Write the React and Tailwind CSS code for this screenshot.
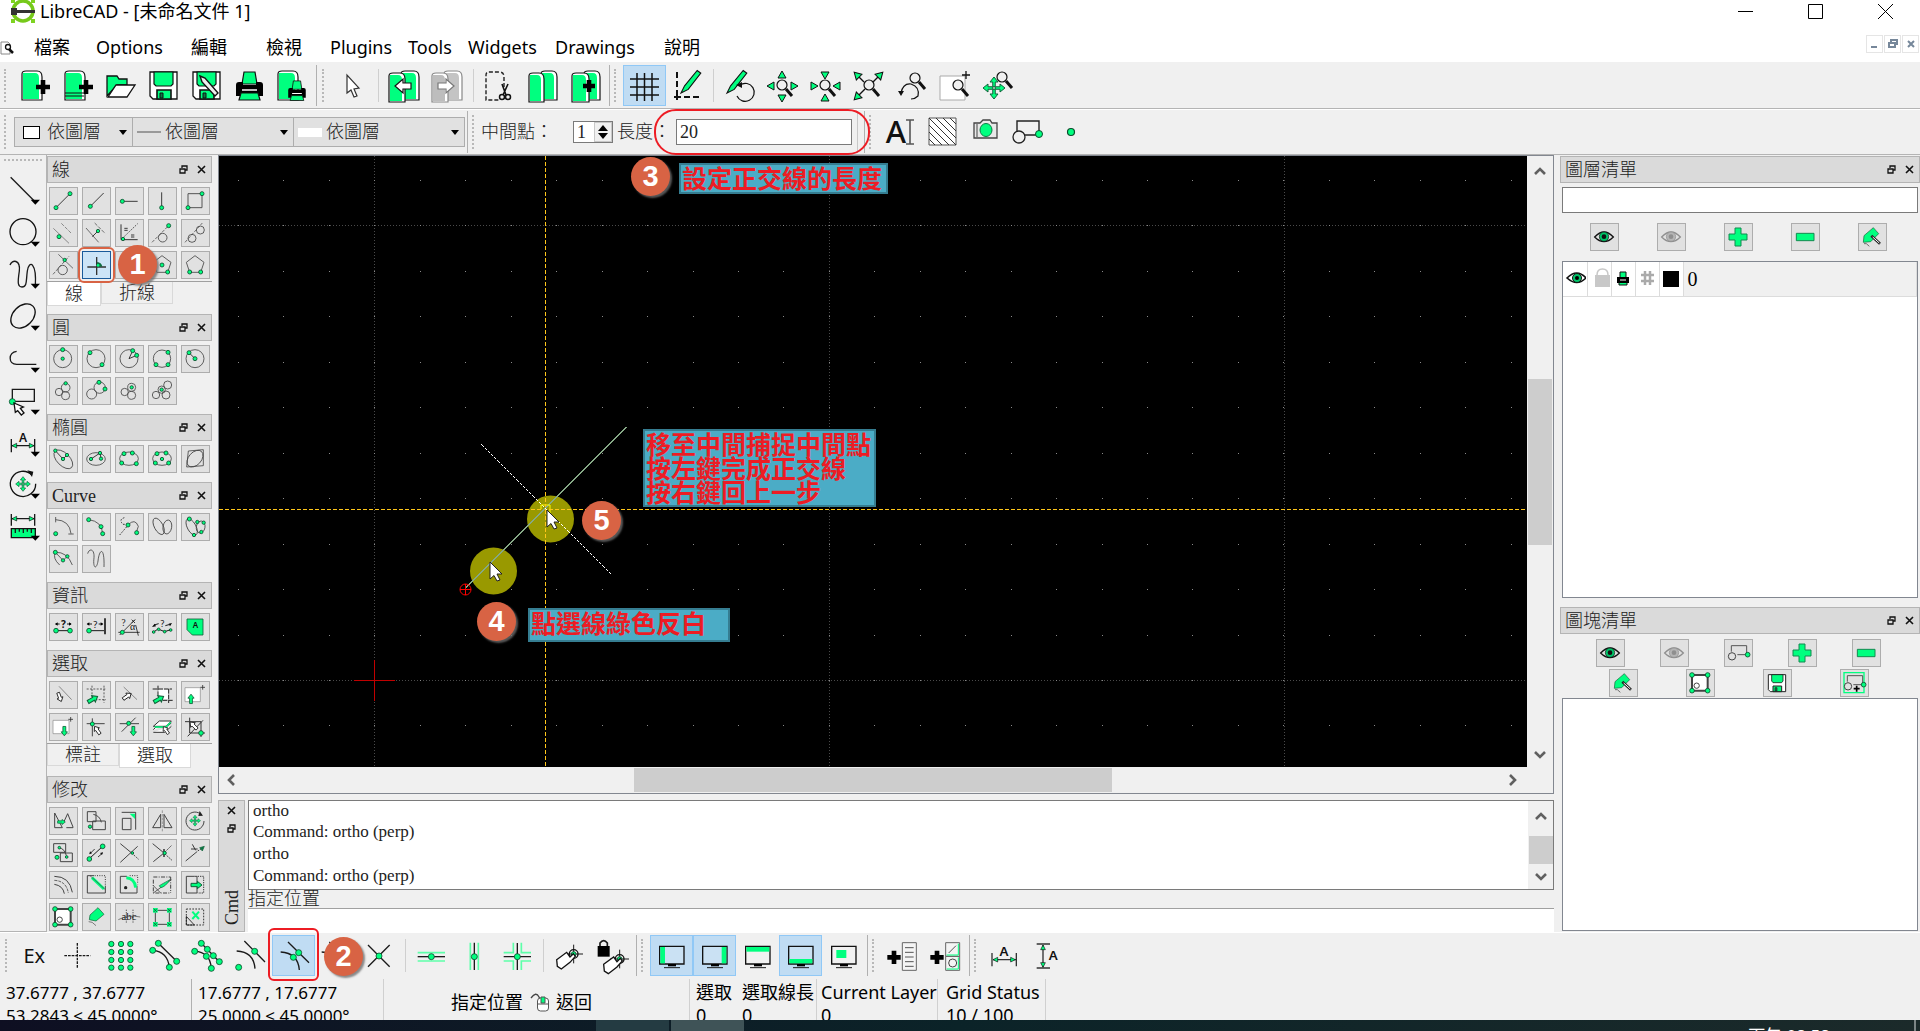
import React from "react";

const G = "#00ff7f";
const K = "#1a1a1a";

/* ---------- drawing helpers ---------- */

const Dot = ({ x, y, r = 6 }) => <circle cx={x} cy={y} r={r} fill={G} stroke="#0d4a2c" strokeWidth="2.5" />;

const Ln = ({ d, c = K, w = 2.5, dash, fill = "none" }) => (
  <path d={d} stroke={c} strokeWidth={w} strokeDasharray={dash} fill={fill} />
);

const Ci = ({ x, y, r, w = 2.5, c = "#444" }) => <circle cx={x} cy={y} r={r} fill="none" stroke={c} strokeWidth={w} />;

const El = ({ x, y, rx, ry, a = 0, w = 2.5 }) => (
  <ellipse cx={x} cy={y} rx={rx} ry={ry} fill="none" stroke="#444" strokeWidth={w} transform={`rotate(${a} ${x} ${y})`} />
);

const Arrow = ({ x, y, a = 0, s = 1, fill = "#fff", stroke = "#222" }) => (
  <path
    d="M0 -17 L11 -3 L5 -3 L5 16 L-5 16 L-5 -3 L-11 -3 Z"
    fill={fill}
    stroke={stroke}
    strokeWidth="3"
    transform={`translate(${x} ${y}) rotate(${a}) scale(${s})`}
  />
);

const Txt = ({ x, y, s = 26, children, serif, w = 400 }) => (
  <text
    x={x}
    y={y}
    fontSize={s}
    fontWeight={w}
    textAnchor="middle"
    fill="#111"
    fontFamily={serif ? '"Liberation Serif", serif' : '"Noto Sans", sans-serif'}
  >
    {children}
  </text>
);

const Moves = ({ x, y, s = 1 }) => (
  <g transform={`translate(${x} ${y}) scale(${s})`}>
    {[0, 90, 180, 270].map((a) => (
      <path key={a} d="M-2.5 -2.5 V-12 H-8 L0 -22 L8 -12 H2.5 V-2.5 Z" fill={G} stroke="#12613a" strokeWidth="2" transform={`rotate(${a})`} />
    ))}
  </g>
);

/* ---------- dock icons, 87 x 84 grid ---------- */

const eye = (c, f) => (
  <>
    <path d="M14 42 Q42 12 70 42 Q42 70 14 42Z" fill="#e1e1e1" stroke={c} strokeWidth="4" />
    <circle cx="42" cy="41" r="14" fill={f} stroke={c} strokeWidth="2" />
    <circle cx="42" cy="41" r="7" fill={c} />
  </>
);
const blockShape = (
  <>
    <path d="M22 38 V20 H68 V47 H40" fill="none" stroke="#555" strokeWidth="3" />
    <Ci x={24} y={52} r={11} w={3} />
    <Dot x={71} y={47} r={7} />
  </>
);
const floppy = (
  <>
    <path d="M16 17 H68 V68 H22 L16 62Z" fill="#fff" stroke="#222" strokeWidth="3" />
    <path d="M26 17 H60 V36 L56 41 H30 L26 36Z" fill={G} stroke="#222" strokeWidth="2.5" />
    <path d="M30 68 V51 H56 V68Z" fill={G} stroke="#222" strokeWidth="3" />
    <path d="M36 56 H42 V66 H36Z" fill="#0a7a44" stroke="#222" strokeWidth="2" />
  </>
);
const frameBlock = (
  <>
    <path d="M18 18 H65 V65 H18Z" fill="#fff" stroke="#444" strokeWidth="6" />
    <Ci x={32} y={50} r={8} w={3} />
    <Dot x={18} y={18} r={7} />
    <Dot x={65} y={18} r={7} />
    <Dot x={18} y={65} r={7} />
    <Dot x={65} y={65} r={7} />
  </>
);
const pent = <path d="M42 14 L69 34 L59 64 H26 L16 34Z" fill="none" stroke="#444" strokeWidth="2.5" />;
const editTag = (
  <>
    <path d="M16 58 L18 38 L46 14 L62 32 L38 56Z" fill={G} stroke="#12613a" strokeWidth="2" />
    <path d="M40 38 L66 62" stroke="#222" strokeWidth="8" />
    <path d="M44 42 L64 60" stroke="#fff" strokeWidth="3" />
    <Ln d="M18 62 Q24 58 34 70" c="#555" />
  </>
);

const I = {
  l1: <><Ln d="M21 62 L63 20" /><Dot x={21} y={62} /><Dot x={63} y={20} /></>,
  l2: <><Ln d="M25 58 L65 18" /><Dot x={25} y={58} /></>,
  l3: <><Ln d="M22 43 H68" /><Dot x={22} y={43} /></>,
  l4: <><Ln d="M41 16 V62" /><Dot x={41} y={62} /></>,
  l5: <><Ln d="M21 20 H63 V62 H21Z" c="#555" w={3} /><Dot x={21} y={62} /><Dot x={63} y={20} /></>,
  l6: <><Ln d="M13 28 L60 73" c="#777" /><Ln d="M37 13 L68 44" c="#777" dash="11 4" /><Dot x={30} y={53} /></>,
  l7: <><Ln d="M12 27 L50 70" c="#555" /><Ln d="M38 12 L70 44" c="#555" dash="11 4" /><Ln d="M31 53 L47 37" /><Dot x={48} y={36} r={5} /></>,
  l8: <><Ln d="M18 16 V62 H68" c="#333" w={3} /><Ln d="M20 60 L68 14" dash="4 4" /><Ln d="M28 28 H38 M28 34 H38 M48 48 H58 M48 54 H58" /><Dot x={24} y={60} r={5} /></>,
  l9: <><Ln d="M12 70 L62 20" dash="10 4" c="#555" /><Ci x={44} y={56} r={13} /><Dot x={62} y={20} /></>,
  l10: <><Ln d="M12 70 L64 12" dash="10 4" c="#555" /><Ci x={33} y={58} r={12} /><Ci x={58} y={33} r={12} /></>,
  l11: <><Ln d="M12 70 L60 16" dash="10 4" c="#555" /><Ln d="M28 10 L72 52" c="#555" /><Ci x={41} y={57} r={14} /><Dot x={47} y={27} r={5} /></>,
  l12: <><Ln d="M16 48 H72 M44 18 V72" c="#333" w={4} /><path d="M46 46 V34 Q58 36 60 46Z" fill="#0a7a44" stroke="#12613a" strokeWidth="2" /><circle cx="48" cy="43" r="4" fill={G} /></>,
  l13: <>{pent}<Dot x={42} y={42} /></>,
  l14: <>{pent}<Dot x={42} y={42} /><Dot x={59} y={63} /></>,
  l15: <>{pent}<Dot x={26} y={63} /><Dot x={59} y={63} /></>,
  c1: <><Ci x={41} y={41} r={27} /><Dot x={41} y={41} r={5} /><Dot x={41} y={14} /></>,
  c2: <><Ci x={42} y={41} r={27} /><Dot x={24} y={23} /><Dot x={60} y={59} /></>,
  c3: <><Ci x={42} y={41} r={27} /><Ln d="M53 17 L42 41 L65 31" /><Dot x={53} y={17} /><Dot x={65} y={31} /></>,
  c4: <><Ci x={42} y={41} r={26} /><Dot x={60} y={22} /><Dot x={24} y={59} /><Dot x={60} y={59} /></>,
  c5: <><Ci x={42} y={41} r={27} /><Ln d="M24 23 L42 41" /><Dot x={24} y={23} /><Dot x={42} y={41} /></>,
  c6: <><Ci x={30} y={45} r={11} /><Ci x={50} y={56} r={12} /><Ci x={50} y={32} r={13} /><Dot x={50} y={19} r={5} /></>,
  c7: <><Ci x={29} y={51} r={15} /><Ci x={53} y={32} r={17} /><Dot x={51} y={16} /><Dot x={69} y={36} /></>,
  c8: <><Ci x={29} y={45} r={11} /><Ci x={50} y={55} r={12} /><Ci x={50} y={31} r={12} /><Dot x={50} y={31} r={5} /></>,
  c9: <><Ci x={24} y={54} r={11} /><Ci x={54} y={54} r={12} /><Ci x={59} y={24} r={12} /><Ci x={41} y={38} r={11} /><Dot x={41} y={38} r={5} /></>,
  e1: <><El x={43} y={43} rx={35} ry={19} a={45} /><Ln d="M19 17 L42 42 L54 30" /><Dot x={19} y={17} r={5} /><Dot x={54} y={30} r={5} /><Dot x={42} y={42} r={5} /></>,
  e2: <><El x={42} y={42} rx={28} ry={19} /><Ln d="M27 42 L54 24 L57 41" /><Dot x={27} y={42} r={5} /><Dot x={54} y={24} r={5} /><Dot x={57} y={41} r={5} /></>,
  e3: <><El x={42} y={41} rx={28} ry={20} /><Dot x={27} y={26} /><Dot x={52} y={24} /><Dot x={20} y={54} /><Dot x={64} y={56} /></>,
  e4: <><El x={42} y={41} rx={28} ry={20} /><Dot x={27} y={26} /><Dot x={54} y={24} /><Dot x={22} y={54} /><Dot x={62} y={54} /><Dot x={42} y={42} r={5} /></>,
  e5: <><Ln d="M22 18 L67 14 L67 62 L17 66Z" c="#444" /><El x={42} y={41} rx={29} ry={19} a={-48} /></>,
  v1: <><Ln d="M20 20 Q62 22 66 62" c="#444" /><Ln d="M20 12 V28 M58 63 H74" c="#444" /><Dot x={20} y={62} /></>,
  v2: <><Ln d="M20 20 Q60 25 62 62" c="#444" /><Dot x={20} y={20} /><Dot x={57} y={41} /><Dot x={62} y={62} /></>,
  v3: <><Ln d="M28 14 Q10 20 24 34 H36 M14 66 L38 38" dash="5 4" /><Ln d="M39 36 Q60 14 70 40 L64 58" c="#444" /><Dot x={39} y={36} /><Dot x={65} y={59} /></>,
  v4: <><El x={32} y={40} rx={27} ry={13} a={62} /><El x={58} y={42} rx={21} ry={13} a={100} /></>,
  v5: <><El x={32} y={42} rx={27} ry={13} a={62} /><El x={59} y={42} rx={18} ry={13} a={100} /><Dot x={25} y={18} /><Dot x={49} y={27} r={5} /><Dot x={68} y={29} r={5} /><Dot x={39} y={66} r={5} /><Dot x={61} y={57} r={5} /></>,
  v6: <><Ln d="M32 60 Q10 40 19 22 Q55 20 70 60 M19 22 L42 46 L55 34" c="#444" /><Dot x={19} y={22} /><Dot x={55} y={34} r={5} /><Dot x={42} y={46} r={5} /></>,
  v7: <Ln d="M17 26 C22 8,38 12,36 38 C32 72,44 74,48 48 C52 10,68 4,66 66" c="#444" />,
  i1: <><Ln d="M21 53 H63" w={3} /><Txt x={43} y={44} s={30} w={700}>?</Txt><Ln d="M20 33 H32 M54 33 H66" w={3} /><path d="M18 33 l8 -5 v10z M68 33 l-8 -5 v10z" /><Dot x={21} y={53} r={7} /><Dot x={63} y={53} r={7} /></>,
  i2: <><Ln d="M21 53 H66" w={3} /><Txt x={40} y={44} s={28}>?</Txt><Ln d="M16 33 H30 M50 33 H62" w={3} /><path d="M14 33 l8 -5 v10z M64 33 l-8 -5 v10z" /><Ln d="M69 16 V64" w={5} /><Dot x={21} y={53} r={7} /></>,
  i3: <><Ln d="M10 58 H74 M14 66 L60 20 M62 36 L70 68" /><Txt x={26} y={38} s={28} serif>?</Txt><Txt x={53} y={52} s={30} serif>α</Txt><Ln d="M50 20 L60 30 M60 20 L50 30" /><Dot x={22} y={58} /></>,
  i4: <><Ln d="M17 57 L30 48 L50 56 L68 50" w={3} /><Txt x={43} y={42} s={26}>?</Txt><path d="M12 42 l8 -10 4 8z M72 30 l-10 2 4 8z" /><Ln d="M18 36 L32 32 M52 38 L66 34" w={3} /><Dot x={17} y={57} r={4} /><Dot x={32} y={49} r={4} /><Dot x={50} y={56} r={4} /><Dot x={68} y={51} r={4} /></>,
  i5: <><path d="M18 18 H66 V66 H34 L18 50Z" fill={G} stroke="#12613a" strokeWidth="2.5" /><Txt x={43} y={46} s={24} w={600}>A</Txt></>,
  s1: <><Ln d="M30 16 L68 56" c="#777" /><Arrow x={32} y={48} a={160} s={0.85} /></>,
  s2: <><Ln d="M30 14 V64 M66 14 V66 M14 24 H72 M40 56 H72" dash="6 4" c="#444" /><Arrow x={32} y={55} a={60} fill={G} stroke="#12613a" /></>,
  s3: <><Ln d="M26 18 L66 56" c="#777" /><Arrow x={36} y={46} a={55} s={0.9} /></>,
  s4: <><path d="M30 26 H60 V54 H30Z" fill="#fff" /><Ln d="M30 14 V44 M14 24 H72 M62 24 V66 M44 58 H74" c="#222" w={3} dash="14 3" /><Arrow x={32} y={55} a={60} fill={G} stroke="#12613a" /></>,
  s5: <><path d="M12 20 H58 V62 H12Z" fill="#fff" stroke="#888" strokeWidth="2" /><Ln d="M65 12 V26 M58 19 H72" c="#333" /><Arrow x={30} y={54} s={0.85} fill={G} stroke="#12613a" /></>,
  s6: <><path d="M12 22 H60 V62 H12Z" fill="#fff" stroke="#888" strokeWidth="2" /><Ln d="M65 12 V26 M58 19 H72" c="#333" /><Arrow x={46} y={54} a={180} s={0.85} fill={G} stroke="#12613a" /></>,
  s7: <><Ln d="M14 32 H68 M31 16 V70" c="#444" w={3} /><Dot x={31} y={33} /><Arrow x={46} y={52} a={-35} s={0.85} /></>,
  s8: <><Ln d="M14 32 H72 M20 56 L62 14" c="#444" w={3} /><Dot x={41} y={31} /><Arrow x={55} y={54} a={180} s={0.85} fill={G} stroke="#12613a" /></>,
  s9: <><path d="M16 40 L34 24 H70 L54 40Z M16 50 L24 42 H54 L70 30 M16 58 H50 L70 40" fill="#fff" stroke="#333" strokeWidth="3" /><Ln d="M20 42 H54 L68 28" c={G} w={4} /><Arrow x={54} y={52} a={-35} s={0.8} /></>,
  s10: <><Ln d="M26 14 V60 H72 M12 26 H60 V72 M20 70 L66 22" c="#333" w={3} /><Dot x={60} y={60} r={7} /><Arrow x={38} y={38} a={-45} s={0.9} /></>,
  m1: <><path d="M17 18 V62 H40Z M52 62 H72 V60 L56 20 L44 46" fill="none" stroke="#444" strokeWidth="3" /><Arrow x={37} y={45} a={90} s={0.7} fill={G} stroke="#12613a" /></>,
  m2: <><Ln d="M16 14 H42 V44 H16Z M32 42 H70 V68 H32Z M34 22 Q54 26 58 46" c="#444" w={3} /><Dot x={24} y={59} r={5} /></>,
  m3: <><Ln d="M20 16 H62 V68 M22 34 H48 V68 H22Z" c="#444" w={3} /><path d="M44 20 H60 V36Z" fill={G} /></>,
  m4: <><Ln d="M38 22 V62 H14Z M48 22 V62 H72Z" c="#444" w={3} /><Ln d="M43 10 V74" c="#777" w={2} dash="8 3" /></>,
  m5: <><path d="M62 24 A27 27 0 1 0 69 42" fill="none" stroke="#444" strokeWidth="3" /><path d="M56 12 L66 26 L52 27Z" fill="#222" /><Moves x={42} y={41} s={0.75} /></>,
  m6: <><Ln d="M14 14 H50 V40 H14Z M34 42 H70 V68 H34Z M30 26 Q48 30 52 50" c="#444" w={3} /><Dot x={24} y={55} /><Dot x={31} y={26} r={4} /><Dot x={53} y={54} r={4} /></>,
  m7: <><Ln d="M22 59 L62 22" w={3} /><Ln d="M24 44 L38 30 M48 54 L62 42" /><path d="M22 46 l2 -9 6 6z M63 40 l-9 2 6 6z" fill="#111" /><Dot x={22} y={60} r={7} /><Dot x={62} y={22} r={7} /></>,
  m8: <><Ln d="M16 14 L50 42 M16 70 L68 22" c="#444" w={3} /><Ln d="M52 44 L72 62" dash="4 3" /><Dot x={52} y={42} r={4} /></>,
  m9: <><Ln d="M14 14 L48 42 L16 68" c="#444" w={3} /><Ln d="M50 40 L70 20 M50 44 L72 64" dash="5 3" /><Ln d="M48 30 V54" w={4} /><Dot x={50} y={42} r={5} /></>,
  m10: <><Ln d="M14 66 L48 38" c="#444" w={3} /><Ln d="M50 36 L66 26" dash="5 3" /><Ln d="M34 16 L44 34 M30 30 H50" /><path d="M56 26 L70 22 L64 36Z" fill="#0a7a44" stroke="#12613a" strokeWidth="2" /></>,
  m11: <><Ln d="M16 16 Q62 16 70 64 M16 40 Q42 44 46 68" c="#444" w={3} /><Ln d="M16 28 Q52 30 58 66" c="#444" dash="9 3" /></>,
  m12: <><Ln d="M16 14 V66 H70 V44 M16 14 H36" c="#444" w={3} /><Ln d="M38 14 H70 V44" dash="3 4" /><Ln d="M30 20 L66 54" c={G} w={9} /><Ln d="M24 14 L70 56" c="#444" w={2} /></>,
  m13: <><Ln d="M16 16 V66 H66 V44 M16 16 H36" c="#444" w={3} /><Ln d="M44 14 H68 V40" dash="3 4" /><Ln d="M34 20 Q60 22 62 50" c={G} w={9} /><circle cx="32" cy="50" r="5" fill="#222" /></>,
  m14: <><Ln d="M16 18 H68 M16 26 V66 H68 M68 18 V66" dash="12 4 3 4" c="#444" w={3} /><Ln d="M16 44 L38 66 M16 66 L70 26" c="#444" /><path d="M34 44 Q44 38 66 26 Q52 48 38 50Z" fill={G} stroke="#12613a" strokeWidth="2" /></>,
  m15: <><Ln d="M40 16 H16 V66 H48 V16Z" c="#444" w={3} /><Ln d="M50 16 H68 V66 H50" dash="4 3" /><Arrow x={46} y={42} a={90} fill={G} stroke="#12613a" /></>,
  m16: frameBlock,
  m17: <><path d="M22 50 L24 36 L48 14 L66 34 L42 54Z" fill={G} stroke="#12613a" strokeWidth="2" /><Ln d="M20 56 Q30 54 42 68" c="#666" /></>,
  m18: <><Txt x={42} y={52} s={32} serif>abc</Txt><Ln d="M10 50 Q40 34 76 42" c="#444" w={2} /><Ln d="M34 20 V60 M54 20 V60" dash="4 3" w={2} /></>,
  m19: <><Ln d="M22 22 H64 V64 H22Z" c="#444" w={3} />{[[22, 22], [64, 22], [22, 64], [64, 64]].map(([a, b]) => <g key={a + "-" + b}><rect x={a - 7} y={b - 7} width="14" height="14" fill={G} /><Ln d={`M${a - 5} ${b - 5} l10 10 m0 -10 l-10 10`} c="#12613a" /></g>)}</>,
  m20: <><Ln d="M16 18 H68 V66 H16Z" dash="5 4" c="#333" w={3} /><Ln d="M34 26 L54 48 M54 26 L34 48" c={G} w={6} /><Ln d="M16 40 V66 H40Z" /></>,
  eye: eye("#111", "#00c468"),
  eyeOff: eye("#8f8f8f", "#b5b5b5"),
  plus: <path d="M33 15 H51 V33 H69 V51 H51 V69 H33 V51 H15 V33 H33Z" fill={G} stroke="#128a50" strokeWidth="3" />,
  minus: <path d="M16 31 H69 V53 H16Z" fill={G} stroke="#128a50" strokeWidth="3" />,
  edit: editTag,
  block: blockShape,
  save: floppy,
  insert: <><path d="M12 11 H72 V71 H12Z" fill="none" stroke={G} strokeWidth="4" />{blockShape}<Ln d="M50 50 V68 M41 59 H59" w={5} c="#000" /></>,
};

/* ---------- large tool icons, 43 x 41 grid ---------- */

const Doc = ({ x = 9, y = 6, w = 20, c = G, s = "#111" }) => (
  <>
    <path d={`M${x} ${y + 29} V${y + 3} Q${x} ${y} ${x + 4} ${y} H${x + w - 5} Q${x + w} ${y} ${x + w} ${y + 6} V${y + 29}Z`} fill="#fff" stroke={s} strokeWidth="1.2" />
    <path d={`M${x + 1} ${y + 28} V${y + 2} H${x + w - 7} Q${x + w - 3} ${y + 2} ${x + w - 3} ${y + 7} V${y + 28}Z`} fill={c} />
  </>
);
const Plus = ({ x, y, r = 7 }) => <path d={`M${x} ${y - r} V${y + r} M${x - r} ${y} H${x + r}`} stroke="#000" strokeWidth="4.6" />;
const Lens = ({ x, y, r = 5 }) => (
  <>
    <circle cx={x} cy={y} r={r} fill="#f0f0f0" stroke="#111" strokeWidth="1.2" />
    <path d={`M${x + r - 1} ${y + r - 1} l6 7`} stroke="#111" strokeWidth="3" />
  </>
);
const Tri = ({ x, y, a }) => <path d="M-4 3 L0 -4 L4 3Z" fill={G} stroke="#111" strokeWidth="1" transform={`translate(${x} ${y}) rotate(${a})`} />;
const bigFloppy = (
  <>
    <path d="M8 7 H35 V34 H11 L8 31Z" fill="#fff" stroke="#111" strokeWidth="1.3" />
    <path d="M12 7 H31 V19 L29 21 H14 L12 19Z" fill={G} stroke="#111" strokeWidth="1.2" />
    <path d="M15 34 V25 H29 V34Z" fill={G} stroke="#111" strokeWidth="1.6" />
    <path d="M18 28 H21 V33 H18Z" fill="#0a7a44" stroke="#111" />
  </>
);
const printer = (t) => (
  <g transform={t}>
    <path d="M14 19 L16 7 H27 L29 19Z" fill={G} stroke="#111" strokeWidth="1.2" />
    <path d="M8 20 Q8 17 11 17 H15 V20 H28 V17 H32 Q35 17 35 20 V31 H8Z" fill="#000" />
    <path d="M13 28 H30 L32 35 H11Z" fill={G} stroke="#111" strokeWidth="1.2" />
    <path d="M14 25 H29" stroke="#fff" strokeWidth="1.5" />
  </g>
);
const pencil = (t) => <path d="M0 0 L4 -8 L18 -25 L22 -22 L8 -4Z" fill={G} stroke="#111" strokeWidth="1.2" transform={t} />;

const T = {
  new: <><Doc /><Plus x={30} y={22} /></>,
  newTpl: <><Doc /><path d="M9 28 H28 M9 31 H28" stroke="#111" /><Plus x={30} y={22} /></>,
  open: <><path d="M8 31 V11 H18 L20 14 H28 V20 H18Z" fill={G} stroke="#111" strokeWidth="1.3" /><path d="M9 32 L17 20 H36 L28 32Z" fill="#fff" stroke="#111" strokeWidth="1.3" /></>,
  save: bigFloppy,
  saveAs: <>{bigFloppy}<path d="M15 11 L20 13 L33 28 L30 31 L17 17Z" fill="#eee" stroke="#111" strokeWidth="1.4" /></>,
  print: printer(),
  preview: <><Doc x={7} />{printer("translate(12 11) scale(0.65 0.7)")}</>,
  select: <path d="M16 10 V28 L20 25 L23 32 L26 31 L23 24 L28 23Z" fill="#fff" stroke="#333" strokeWidth="1.2" />,
  undo: <><Doc x={18} y={6} w={18} /><Doc x={6} y={8} w={16} /><path d="M12 21 L20 14 V18 H28 V24 H20 V28Z" fill="#fff" stroke="#111" strokeWidth="1.2" /></>,
  redo: <><Doc x={18} y={6} w={18} c="#c4c4c4" s="#888" /><Doc x={6} y={8} w={16} c="#bdbdbd" s="#888" /><path d="M28 21 L20 14 V18 H12 V24 H20 V28Z" fill="#fff" stroke="#777" strokeWidth="1.2" /></>,
  cut: <><path d="M26 22 V12 Q26 7 21 7 H11 Q8 7 8 10 V35 H21" fill="none" stroke="#222" strokeWidth="1.4" strokeDasharray="4 2" /><path d="M24 19 L28 30 M30 19 L25 30" stroke="#111" strokeWidth="1.6" /><circle cx="24" cy="32" r="2.5" fill="none" stroke="#111" strokeWidth="1.5" /><circle cx="30" cy="32" r="2.5" fill="none" stroke="#111" strokeWidth="1.5" /></>,
  copy: <><Doc x={20} y={6} w={16} /><Doc x={8} y={8} w={15} /></>,
  paste: <><Doc x={20} y={6} w={16} /><Doc x={8} y={8} w={17} /><Plus x={25} y={21} r={6} /></>,
  grid: <path d="M14 8 V36 M21.500 8 V36 M29 8 V36 M7 14 H36 M7 22 H36 M7 30 H36" stroke="#111" strokeWidth="1.5" />,
  draft: <><path d="M11 7 V32 M9 32 H36" stroke="#111" strokeWidth="2" strokeDasharray="6 3" /><path d="M8 32 H14 M11 29 V35" stroke="#111" strokeWidth="2" />{pencil("translate(15 28) scale(0.9)")}</>,
  redraw: <>{pencil("translate(9 28) scale(0.9)")}<path d="M22 20 A9 9 0 1 1 19 31" fill="none" stroke="#111" strokeWidth="1.2" /><path d="M18 20 l6 -3 v6z" fill="#111" /></>,
  zoomIn: <><Lens x={21} y={20} /><Tri x={21} y={10} a={0} /><Tri x={21} y={33} a={180} /><Tri x={10} y={21} a={-90} /><Tri x={33} y={21} a={90} /></>,
  zoomOut: <><Lens x={21} y={20} /><Tri x={21} y={10} a={180} /><Tri x={21} y={33} a={0} /><Tri x={10} y={21} a={90} /><Tri x={33} y={21} a={-90} /></>,
  zoomAuto: <><path d="M10 10 L17 17 M33 10 L26 17 M10 32 L18 24" stroke="#111" strokeWidth="1.4" /><Lens x={22} y={20} /><Tri x={10} y={10} a={-45} /><Tri x={33} y={10} a={45} /><Tri x={10} y={32} a={-135} /></>,
  zoomPrev: <><Lens x={25} y={13} r={5} /><path d="M11 28 Q13 18 21 19 Q30 22 28 31 Q25 34 21 34" fill="none" stroke="#111" strokeWidth="1.2" /><path d="M8 26 h6 l-3 5z" fill="#111" /></>,
  zoomWin: <><path d="M7 11 H32 V35 H7Z" fill="#fff" stroke="#aaa" strokeWidth="1" /><Lens x={25} y={20} /><path d="M33 6 V14 M29 10 H37" stroke="#111" strokeWidth="1.3" /></>,
  zoomPan: <><Moves x={18} y={23} s={0.5} /><Lens x={26} y={12} /></>,
};

const row2Icons = [
  ["Text", <><Txt x={18} y={32} s={31} w={500}>A</Txt><path d="M28 9 H36 M28 33 H36 M32 9 V33" stroke="#555" strokeWidth="1.6" /></>],
  ["Hatch", <><path d="M8 7 H35 V34 H8Z" fill="#fff" stroke="#555" /><path d="M8 28 L14 34 M8 21 L21 34 M8 14 L28 34 M8 7 L35 34 M15 7 L35 27 M22 7 L35 20 M29 7 L35 13" stroke="#333" strokeWidth="1" /></>],
  ["Insert image", <><path d="M10 12 H16 L19 9 H26 L28 12 H33 V27 H10Z" fill="#e8e8e8" stroke="#444" strokeWidth="1.3" /><path d="M13 13 V26" stroke="#444" /><ellipse cx="22" cy="19" rx="6" ry="6.500" fill={G} stroke="#0a7a44" /></>],
  ["Create block", <><path d="M10 21 V10 H32 V24 H17" fill="none" stroke="#222" strokeWidth="1.4" /><circle cx="12" cy="26" r="6" fill="none" stroke="#222" strokeWidth="1.3" /><circle cx="32" cy="23" r="3.500" fill={G} stroke="#0d4a2c" /></>],
  ["Point", <circle cx="21" cy="21" r="3.500" fill={G} stroke="#0d4a2c" strokeWidth="1.2" />],
];

/* ---------- snap toolbar icons, 129 x 123 grid ---------- */

const W = 4;
const monitor = (fill) => (
  <>
    <path d="M29 34 H102 V87 H29Z" fill="#f4f4f4" fillOpacity="0.2" stroke="#111" strokeWidth="4" />
    {fill}
    <path d="M54 87 H78 V94 H54Z" fill="#000" />
    <Ln d="M42 98 H90" w={3} />
  </>
);
const cross = (x, y) => (
  <>
    <Ln d={`M${x - 28} ${y} H${x + 28} M${x} ${y - 28} V${y + 28}`} w={3} />
    <Ci x={x} y={y} r={13} w={4} c="#111" />
    <Dot x={x} y={y} r={7} />
  </>
);
const tag = (t) => <path d="M0 0 L30 -22 L40 -8 L50 -18 L56 -10 L40 8 L14 28 L2 20Z" fill="#fff" stroke="#111" strokeWidth="4" transform={t} />;
const S = {
  free: <Ln d="M22 62 H100 M61 24 V100" w={W} dash="8 3" />,
  grid: [34, 63, 91].flatMap((x) => [27, 51, 75, 98].map((y) => <Dot key={x + "." + y} x={x} y={y} r={8} />)),
  end: <><Ln d="M46 25 L101 79 M29 46 Q74 50 79 97" w={W} /><Dot x={46} y={25} r={9} /><Dot x={101} y={79} r={9} /><Dot x={29} y={46} r={9} /><Dot x={79} y={97} r={9} /></>,
  on: <><Ln d="M46 25 L100 80 M26 49 Q72 50 76 100" w={W} />{[[46, 25], [64, 43], [82, 62], [100, 80], [26, 49], [61, 64], [76, 100]].map(([x, y]) => <Dot key={x} x={x} y={y} r={9} />)}</>,
  center: <><Ln d="M46 18 L108 81 M23 48 Q74 50 78 101" w={W} /><Dot x={77} y={49} r={9} /><Dot x={29} y={97} r={9} /></>,
  middle: <><Ln d="M48 21 L111 83 M26 51 Q78 54 82 105" w={W} /><Dot x={80} y={53} r={9} /><Dot x={64} y={67} r={9} /></>,
  dist: <><Ln d="M43 21 L108 83 M20 51 Q74 54 78 105" w={W} /><Dot x={90} y={67} r={9} /></>,
  inter: <><Ln d="M30 30 L95 95 M95 30 L30 95" w={W} /><Dot x={63} y={63} r={9} /></>,
  horiz: <><Ln d="M23 53 H105 M23 78 H105" c="#5dffa9" w={5} /><Ln d="M23 65 H105" w={W} /><Dot x={64} y={65} r={9} /></>,
  vert: <><Ln d="M52 23 V105 M76 23 V105" c="#5dffa9" w={5} /><Ln d="M64 23 V105" w={W} /><Dot x={64} y={65} r={9} /></>,
  ortho: <><Ln d="M23 53 H52 V23 M76 23 V53 H105 M105 78 H76 V105 M52 105 V78 H23" c="#5dffa9" w={5} /><Ln d="M23 65 H105 M64 24 V105" w={W} /><Dot x={64} y={65} r={9} /></>,
  relZero: <>{cross(77, 57)}{tag("translate(26 74)")}</>,
  lockZero: <><path d="M20 33 H56 V65 H20Z" fill="#000" /><Ln d="M27 33 V24 Q38 10 49 24 V33" w={5} />{cross(86, 72)}{tag("translate(38 88)")}</>,
  mLeft: monitor(<path d="M31 36 H45 V85 H31Z" fill={G} />),
  mRight: monitor(<path d="M86 36 H100 V85 H86Z" fill={G} />),
  mTop: monitor(<path d="M31 36 H100 V50 H31Z" fill={G} />),
  mBottom: monitor(<path d="M31 72 H100 V85 H31Z" fill={G} />),
  mFloat: monitor(<path d="M43 45 H73 V69 H43Z" fill={G} />),
  addList: <><Ln d="M39 47 V87 M19 67 H59" w={14} c="#000" /><path d="M64 23 H106 V106 H64Z" fill="#f4f4f4" stroke="#666" strokeWidth="3" /><Ln d="M72 38 H98 M72 52 H98 M72 66 H98 M72 80 H98 M72 94 H98" c="#555" w={3} /></>,
  addTool: <><Ln d="M39 47 V87 M19 67 H59" w={14} c="#000" /><path d="M65 23 H107 V64 H65Z M65 64 H107 V106 H65Z" fill="#f4f4f4" stroke="#666" strokeWidth="3" /><Ln d="M103 26 V60 H68 M103 67 V102 H68" c={G} w={3} /><Ln d="M74 54 L96 32" c="#333" /><Ci x={86} y={84} r={12} w={3} /></>,
  dimH: <><Ln d="M27 54 V94 M100 54 V94 M30 74 H98" w={4} c="#333" /><path d="M30 74 l14 -7 v14z M97 74 l-14 -7 v14z" fill={G} stroke="#111" strokeWidth="2" /><Txt x={63} y={62} s={40} w={600}>A</Txt></>,
  dimV: <><Ln d="M32 27 H72 M32 99 H72 M51 30 V96" w={4} c="#333" /><path d="M51 30 l-7 14 h14z M51 97 l-7 -14 h14z" fill={G} stroke="#111" strokeWidth="2" /><Txt x={82} y={76} s={40} w={600}>A</Txt></>,
};

/* ---------- left tool strip icons, 141 x 126 grid ---------- */

const strip = [
  ["Lines", <Ln d="M32 25 L106 99" w={4} />],
  ["Circles", <Ci x={69} y={62} r={39} w={4} c="#111" />],
  ["Curves", <Ln d="M30 36 C36 18,62 20,58 54 C52 92,54 102,66 102 C82 102,78 82,82 54 C88 18,110 30,106 98" w={4} />],
  ["Ellipses", <ellipse cx="69" cy="63" rx="42" ry="30" fill="none" stroke="#111" strokeWidth="4" transform="rotate(-45 69 63)" />],
  ["Polylines", <Ln d="M50 43 C24 46,24 82,50 82 H109" w={4} />],
  ["Select", <><Ln d="M37 31 H103 V67 H37Z" w={4} /><Dot x={37} y={68} r={9} /><path d="M42 72 L46 100 L53 95 L64 108 L72 102 L61 88 L70 84Z" fill="#fff" stroke="#111" strokeWidth="4" /></>],
  ["Dimensions", <><Txt x={69} y={62} s={36} w={600}>A</Txt><Ln d="M34 54 V94 M104 54 V94 M36 74 H102" w={4} /><path d="M36 74 l14 -7 v14z M102 74 l-14 -7 v14z" fill={G} stroke="#111" strokeWidth="2" /></>],
  ["Modify", <><path d="M96 36 A38 38 0 1 0 107 62" fill="none" stroke="#111" strokeWidth="4" /><path d="M82 22 L100 26 L96 42Z" fill="#111" /><Moves x={69} y={63} /></>],
  ["Info", <><Ln d="M34 27 V62 M104 27 V62 M36 41 H102" w={4} /><path d="M36 41 l14 -7 v14z M102 41 l-14 -7 v14z" fill={G} stroke="#111" strokeWidth="2" /><path d="M34 71 H106 V98 H34Z" fill={G} stroke="#111" strokeWidth="4" /><Ln d="M46 71 V84 M58 71 V80 M70 71 V84 M82 71 V80 M94 71 V84" w={4} /></>],
];

/* ---------- shared controls ---------- */

const cjk = "font-light font-['Liberation_Serif','Noto_Sans_CJK_TC',serif]";

const Handle = () => <span className="ml-1 mr-[7px] my-1 border-l-2 border-dotted border-[#b8b8b8]" />;
const Sep = () => <span className="mx-1 my-1 w-px bg-[#cfcfcf]" />;

function ToolBtn({ label, box = "0 0 43 41", active, children }) {
  return (
    <button
      aria-label={label}
      className={"h-[41px] w-[43px] shrink-0 " + (active ? "bg-[#c0dcf3] outline outline-1 -outline-offset-1 outline-[#90c8f6]" : "")}
    >
      <svg viewBox={box} className="block h-[41px] w-[43px]">{children}</svg>
    </button>
  );
}

const Bar = ({ children, last, className = "" }) => (
  <div className={"flex items-stretch " + (last ? "" : "border-r border-[#b0b0b0] pr-[2px] ") + className}>
    <Handle />
    {children}
  </div>
);

const FloatGlyph = () => (
  <svg viewBox="0 0 9 9" className="h-[9px] w-[9px]"><path d="M3 3 V1 H8 V5 H6 M1 4 H6 V8 H1Z" fill="none" stroke="#111" strokeWidth="1.3" /></svg>
);
const CloseGlyph = () => (
  <svg viewBox="0 0 9 9" className="h-[9px] w-[9px]"><path d="M1 1 L8 8 M8 1 L1 8" stroke="#111" strokeWidth="1.6" /></svg>
);

const DockTitle = ({ children }) => (
  <div className="flex h-[27px] items-center border border-[#b4b4b4] bg-[#dadada] pl-1 pr-[5px]">
    <h2 className={"flex-1 text-[18px] leading-6 text-[#222] " + cjk}>{children}</h2>
    <button aria-label="Float" className="mr-[9px]"><FloatGlyph /></button>
    <button aria-label="Close"><CloseGlyph /></button>
  </div>
);

function IconBtn({ id, active }) {
  return (
    <button
      aria-label={id}
      className={"block h-7 w-[29px] shrink-0 border " + (active ? "border-[#1a5a9a] bg-[#cce4f7]" : "border-[#adadad] bg-[#e1e1e1]")}
    >
      <svg viewBox="3 3 81 78" className="block h-[26px] w-[27px]">{I[id]}</svg>
    </button>
  );
}

const Badge = ({ children, className }) => (
  <span
    className={
      "absolute z-10 flex h-[39px] w-[39px] items-center justify-center rounded-full bg-[#d86344] font-['Liberation_Sans',sans-serif] text-[29px] font-bold text-white shadow-[2px_2px_2px_rgba(110,110,110,0.8)] " +
      className
    }
  >
    {children}
  </span>
);

function Palette({ title, ids, tabs, activeTab }) {
  return (
    <section>
      <DockTitle>{title}</DockTitle>
      <div className="grid grid-cols-[repeat(5,29px)] gap-1 px-[2px] pt-1">
        {ids.map((id) =>
          id === "l12" ? (
            <div key={id} className="relative">
              <IconBtn id={id} active />
              <span className="absolute -inset-1 rounded-md border-2 border-[#d86344]" />
              <Badge className="left-[36px] top-[-6px]">1</Badge>
            </div>
          ) : (
            <IconBtn key={id} id={id} />
          )
        )}
      </div>
      {tabs && (
        <div role="tablist" className="mt-[2px] flex h-6 items-start border-t border-[#a0a0a0]">
          {tabs.map((t) => (
            <button
              key={t}
              role="tab"
              aria-selected={t === activeTab}
              className={
                "border border-t-0 border-[#d9d9d9] px-[17px] text-[18px] text-[#222] " + cjk + " " +
                (t === activeTab ? "h-6 bg-white leading-6" : "h-[22px] leading-[22px]")
              }
            >
              {t}
            </button>
          ))}
        </div>
      )}
    </section>
  );
}

const seq = (p, n) => Array.from({ length: n }, (_, i) => p + (i + 1));

const Chevron = ({ a }) => (
  <svg viewBox="0 0 12 12" className="h-3 w-3"><path d="M1 9 L6 4 L11 9" fill="none" stroke="#606060" strokeWidth="2.6" transform={`rotate(${a} 6 6)`} /></svg>
);

function Combo({ label, className, children }) {
  return (
    <div className={"relative -ml-px border border-[#adadad] bg-[#e1e1e1] first:ml-0 " + className}>
      <span className="absolute left-2 top-0 flex h-7 items-center">{children}</span>
      <select aria-label={label} className={"h-7 w-full appearance-none bg-transparent pl-8 text-[18px] text-[#222] " + cjk}>
        <option>依圖層</option>
      </select>
      <span className="pointer-events-none absolute right-[5px] top-[12px] border-x-4 border-t-[5px] border-x-transparent border-t-black" />
    </div>
  );
}

/* ---------- drawing area ---------- */

const STEP = 45.45;
const gx = Array.from({ length: 30 }, (_, i) => Math.round(19 + i * STEP));
const gy = Array.from({ length: 14 }, (_, i) => Math.round(24 + i * STEP));

const Pointer = ({ x, y }) => (
  <path d="M0 0 V17 L4 13.500 L7 19 L10 18 L7 12 H12Z" fill="#fff" stroke="#222" strokeWidth="1" transform={`translate(${x} ${y})`} />
);

const Note = ({ className, children }) => (
  <div className={"absolute border-2 border-[#357d91] bg-[#4bacc6] pl-[1px] font-['Noto_Sans_CJK_TC',sans-serif] text-[25px] font-bold leading-6 text-[#ed1c24] " + className}>{children}</div>
);

function Canvas() {
  return (
    <div className="relative flex-1 overflow-hidden bg-black">
      <svg className="absolute inset-0 h-full w-full">
        <g stroke="#4a4a4a" strokeDasharray="1 2">
          <path d="M155.500 0 V900 M610.500 0 V900 M1065.500 0 V900 M0 69.500 H1700 M0 524.500 H1700" />
        </g>
        {gx.map((x) => gy.map((y) => <rect key={x + "," + y} x={x} y={y} width="1" height="1" fill="#8a8a8a" />))}
        <path d="M135 524.500 H176 M155.500 504 V545" stroke="#c00000" />
        <circle cx="331.500" cy="363" r="23.500" fill="#999900" />
        <circle cx="274.500" cy="415" r="23.500" fill="#999900" />
        <path d="M326.500 0 V900 M0 353.500 H1700" stroke="#ffc61a" strokeDasharray="4 2" />
        <path d="M246.500 432 L407.500 271" stroke="#86a886" shapeRendering="crispEdges" />
        <path d="M262.500 288.500 L392.500 418.500" stroke="#fff" strokeDasharray="3 1.500" shapeRendering="crispEdges" />
        <path d="M322 349 H326 M327 349 H331 V353 M331 354 V358 H327 M322 353 V349" fill="none" stroke="#ffff00" />
        <g stroke="#f00" fill="none">
          <circle cx="246.500" cy="433.500" r="5.500" />
          <path d="M241 433.500 H252 M246.500 428 V439" />
        </g>
        <Pointer x={328} y={354} />
        <Pointer x={271} y={406} />
      </svg>
      <Badge className="left-[412px] top-px">3</Badge>
      <Note className="left-[460px] top-[7px] h-[31px] w-[209px]">設定正交線的長度</Note>
      <Badge className="left-[363px] top-[345px]">5</Badge>
      <Note className="left-[424px] top-[273px] h-[78px] w-[233px]">
        <p>移至中間捕捉中間點</p>
        <p>按左鍵完成正交線</p>
        <p>按右鍵回上一步</p>
      </Note>
      <Badge className="left-[258px] top-[446px]">4</Badge>
      <Note className="left-[309px] top-[452px] h-[34px] w-[202px]">點選線綠色反白</Note>
    </div>
  );
}

/* ---------- page ---------- */

const menus = [
  ["檔案", "w-[62px]"], ["Options", "w-[95px]"], ["編輯", "w-[75px]"], ["檢視", "w-[64px]"], ["Plugins", "w-[78px]"],
  ["Tools", "w-[60px]"], ["Widgets", "w-[87px]"], ["Drawings", "w-[109px]"], ["說明", ""],
];

const snap = (id, active) => (
  <ToolBtn key={id} label={id} box="0 0 129 123" active={active}>{S[id]}</ToolBtn>
);
const top = (id, active) => <ToolBtn key={id} label={id} active={active}>{T[id]}</ToolBtn>;

const Stat = ({ a, b, className }) => (
  <div className={"whitespace-nowrap pt-[2px] leading-[23px] " + className}>
    <div>{a}</div>
    <div>{b}</div>
  </div>
);

export default function App() {
  return (
    <div className="flex h-screen flex-col overflow-hidden bg-[#f0f0f0] font-['Noto_Sans','Noto_Sans_CJK_TC',sans-serif] text-[18px] text-black">
      <header className="bg-white">
        <div className="flex h-[25px] items-start pl-[10px]">
          <svg viewBox="0 0 26 24" className="h-6 w-[26px]">
            <path d="M1 0 H5 V3 H1Z M21 0 H25 V3 H21Z M1 19 H5 V23 H1Z M21 19 H25 V23 H21Z" fill="#7ed321" />
            <circle cx="13" cy="11" r="10" fill="#fff" stroke="#76c91b" strokeWidth="3.500" />
            <path d="M1 8 H7 V10 H25 V13 H7 V15 H1Z" fill="#333" />
          </svg>
          <h1 className="ml-1 flex-1 text-[18px] leading-[22px]">LibreCAD - [未命名文件 1]</h1>
          <div className="flex items-center gap-[55px] pr-[27px] pt-1">
            <button aria-label="Minimize" className="leading-none"><svg viewBox="0 0 15 15" className="h-[15px] w-[15px]"><path d="M0 7.500 H15" stroke="#000" /></svg></button>
            <button aria-label="Maximize" className="leading-none"><svg viewBox="0 0 15 15" className="h-[15px] w-[15px]"><path d="M0.500 0.500 H14.500 V14.500 H0.500Z" fill="none" stroke="#000" /></svg></button>
            <button aria-label="Close window" className="leading-none"><svg viewBox="0 0 15 15" className="h-[15px] w-[15px]"><path d="M0 0 L15 15 M15 0 L0 15" stroke="#000" /></svg></button>
          </div>
        </div>
        <nav className="flex h-[37px] items-center pt-[9px]">
          <svg viewBox="0 0 14 16" className="mr-5 h-4 w-[14px]">
            <path d="M1 2 H8 L10 4 V14 H1Z" fill="#fff" stroke="#888" />
            <circle cx="8" cy="7" r="2.500" fill="#fff" stroke="#111" strokeWidth="1.300" /><path d="M9 9 L13 13" stroke="#111" strokeWidth="2.500" />
          </svg>
          {menus.map(([m, w]) => (
            <button key={m} className={"pb-[2px] text-left leading-6 " + w}>{m}</button>
          ))}
          <div className="ml-auto flex gap-[1px] pr-[1px] pb-[9px]">
            {["M4 11 H10", "M6 6 V4 H12 V8 H10 M4 7 H10 V11 H4Z", "M5 5 L11 11 M11 5 L5 11"].map((d) => (
              <button key={d} aria-label="Document window" className="border border-[#e5e5e5]"><svg viewBox="0 0 15 16" className="block h-4 w-[15px]"><path d={d} fill="none" stroke="#76879a" strokeWidth="2" /></svg></button>
            ))}
          </div>
        </nav>
      </header>

      <div className="flex h-[47px] border-b border-[#b4b4b4] pt-[3px] pb-[2px]">
        <Bar>{["new", "newTpl", "open", "save", "saveAs", "print", "preview"].map((i) => top(i))}</Bar>
        <Bar className="pl-px">{top("select")}<Sep />{top("undo")}{top("redo")}<Sep />{top("cut")}{top("copy")}{top("paste")}</Bar>
        <Bar last>
          {top("grid", true)}{top("draft")}<Sep />
          {["redraw", "zoomIn", "zoomOut", "zoomAuto", "zoomPrev", "zoomWin", "zoomPan"].map((i) => top(i))}
        </Bar>
      </div>

      <div className={"flex h-[46px] border-b border-t border-b-[#b4b4b4] border-t-white py-[1px] " + cjk}>
        <Bar>
          <div className="flex items-center pl-px">
            <Combo label="Color" className="w-[119px]"><span className="h-[13px] w-[17px] border border-black bg-white" /></Combo>
            <Combo label="Width" className="w-[162px]"><span className="-ml-1 h-[2px] w-6 bg-[#999]" /></Combo>
            <Combo label="Line type" className="w-[172px]"><span className="-ml-1 h-[9px] w-6 bg-white" /></Combo>
          </div>
        </Bar>
        <Bar>
          <div className="flex items-center pr-1 text-[#222]">
            <label htmlFor="mid" className="w-[92px] whitespace-nowrap leading-6">中間點：</label>
            <span className="flex h-[22px] w-10 border border-[#7a7a7a] bg-white">
              <input id="mid" defaultValue="1" className="w-5 min-w-0 pl-[3px] text-[18px]" />
              <span className="flex w-[18px] flex-col items-center justify-evenly border border-[#c8c8c8] bg-[#f0f0f0]">
                <button aria-label="Increase" className="border-x-[5px] border-b-[6px] border-x-transparent border-b-black" />
                <button aria-label="Decrease" className="border-x-[5px] border-t-[6px] border-x-transparent border-t-black" />
              </span>
            </span>
            <span className="relative ml-1 flex items-center">
              <label htmlFor="len" className="w-[59px] whitespace-nowrap leading-6">長度：</label>
              <input id="len" defaultValue="20" className="h-[26px] w-44 border border-[#7a7a7a] bg-white pl-[3px] text-[18px] text-[#222]" />
              <span className="absolute -top-[10px] left-[37px] z-10 h-[46px] w-[216px] rounded-[22px] border-2 border-[#ed1c24]" />
            </span>
            <span className="ml-[5px] h-[42px] w-px bg-[#c8c8c8]" />
          </div>
        </Bar>
        <Bar last>
          {row2Icons.map(([l, d]) => <ToolBtn key={l} label={l}>{d}</ToolBtn>)}
        </Bar>
      </div>

      <main className="flex min-h-0 flex-1">
        <div className="flex w-[47px] flex-col border-b border-r border-[#b4b4b4]">
          <span className="mx-1 mt-1 mb-2 border-t-2 border-dotted border-[#b8b8b8]" />
          {strip.map(([l, d]) => (
            <button key={l} aria-label={l} className="h-[42px]">
              <svg viewBox="0 0 141 126" className="block h-[42px] w-[47px]">{d}<path d="M92 92 H120 L106 107Z" fill="#000" /></svg>
            </button>
          ))}
        </div>

        <aside className="flex w-[165px] shrink-0 flex-col gap-[9px] overflow-hidden pt-[1px]">
          <Palette title="線" ids={seq("l", 15)} tabs={["線", "折線"]} activeTab="線" />
          <Palette title="圓" ids={seq("c", 9)} />
          <Palette title="橢圓" ids={seq("e", 5)} />
          <Palette title="Curve" ids={seq("v", 7)} />
          <Palette title="資訊" ids={seq("i", 5)} />
          <Palette title="選取" ids={seq("s", 10)} tabs={["標註", "選取"]} activeTab="選取" />
          <Palette title="修改" ids={seq("m", 20)} />
        </aside>

        <div className="ml-[6px] flex min-w-0 flex-1 flex-col">
          <div className="flex min-h-0 flex-1 flex-col border border-[#828790]">
            <div className="flex min-h-0 flex-1">
              <Canvas />
              <div className="flex w-[26px] flex-col items-center pt-[9px] pb-[6px]">
                <Chevron a={0} />
                <span className="flex-[202]" />
                <span className="w-6 flex-[167] bg-[#cdcdcd]" />
                <span className="flex-[204]" />
                <Chevron a={180} />
              </div>
            </div>
            <div className="flex h-[26px] items-center pl-[6px] pr-[34px]">
              <Chevron a={-90} />
              <span className="flex-[397]" />
              <span className="h-6 flex-[478] bg-[#cdcdcd]" />
              <span className="flex-[395]" />
              <Chevron a={90} />
            </div>
          </div>

          <div className="mt-[6px] flex h-[132px] shrink-0">
            <div className="flex w-[27px] flex-col items-center border border-[#b4b4b4] bg-[#dadada] pt-[5px] pb-[6px]">
              <button aria-label="Close command" className="leading-none"><CloseGlyph /></button>
              <button aria-label="Float command" className="mt-[9px] leading-none"><FloatGlyph /></button>
              <h2 className={"mt-auto rotate-180 text-[18px] leading-6 text-[#222] [writing-mode:vertical-rl] " + cjk}>Cmd</h2>
            </div>
            <div className={"ml-[3px] flex flex-1 flex-col text-[17px] text-[#222] " + cjk}>
              <div className="flex h-[90px] items-start border border-[#7a7a7a] bg-white">
                <div className="flex-1 pl-1 leading-[22px]">
                  <div className="leading-5">ortho</div>
                  <div>Command: ortho (perp)</div>
                  <div>ortho</div>
                  <div>Command: ortho (perp)</div>
                </div>
                <div className="flex h-full w-[25px] flex-col items-center bg-[#f0f0f0] pt-[9px] pb-[6px]">
                  <Chevron a={0} />
                  <span className="flex-[14]" />
                  <span className="h-7 w-6 shrink-0 bg-[#cdcdcd]" />
                  <span className="flex-[7]" />
                  <Chevron a={180} />
                </div>
              </div>
              <label htmlFor="cmd" className="block h-[18px] text-[18px] leading-[18px]">指定位置</label>
              <input id="cmd" className="min-h-0 flex-1 border-t border-[#a0a0a0] bg-white" />
            </div>
          </div>
        </div>

        <aside className="ml-[6px] flex w-[360px] shrink-0 flex-col pt-[1px]">
          <DockTitle>圖層清單</DockTitle>
          <input aria-label="Layer filter" className="mx-[2px] mt-1 h-[26px] border border-[#7a7a7a] bg-white" />
          <div className="flex justify-between px-[30px] py-[10px] pr-[33px]">
            {["eye", "eyeOff", "plus", "minus", "edit"].map((i) => <IconBtn key={i} id={i} />)}
          </div>
          <div className="mx-[2px] h-[337px] border border-[#828790] bg-white">
            <table className="w-full table-fixed border-collapse">
              <tbody>
                <tr className="h-[34px] [&>td]:border-b [&>td]:border-r [&>td]:border-[#dcdcdc] [&>td]:p-0">
                  <td className="w-6"><svg viewBox="0 0 23 33" className="h-[33px] w-[23px]"><path d="M4 16 Q14 6 23 16 Q14 25 4 16Z" fill="#fff" stroke="#111" strokeWidth="1.600" /><circle cx="14" cy="16" r="4.500" fill="#00c468" stroke="#111" /><circle cx="14" cy="16" r="2" /></svg></td>
                  <td className="w-6"><svg viewBox="0 0 23 33" className="h-[33px] w-[23px]"><path d="M7 13 H22 V25 H7Z" fill="#c8c8c8" /><path d="M9 13 Q9 7 14.500 7 Q20 7 20 13" fill="none" stroke="#c8c8c8" strokeWidth="1.500" /></svg></td>
                  <td className="w-6"><svg viewBox="0 0 23 33" className="h-[33px] w-[23px]"><path d="M8 16 V10 H14 V16Z M7 19 H15 V23 H7Z" fill={G} stroke="#111" /><path d="M5 15 H17 V21 H5Z" fill="#000" /><path d="M8 18 H14" stroke="#fff" /></svg></td>
                  <td className="w-6"><svg viewBox="0 0 23 33" className="h-[33px] w-[23px]"><path d="M9 9 V23 M14 9 V23 M5 13 H18 M5 19 H18" stroke="#aaa" strokeWidth="2.500" /></svg></td>
                  <td className="w-6"><div className="ml-[3px] h-4 w-4 bg-black" /></td>
                  <td className={"bg-[#f0f0f0] !pl-1 text-[20px] leading-6 " + cjk}>0</td>
                </tr>
              </tbody>
            </table>
          </div>
          <div className="mt-[9px]"><DockTitle>圖塊清單</DockTitle></div>
          <div className="mt-[5px] flex justify-between pl-9 pr-[39px]">
            {["eye", "eyeOff", "block", "plus", "minus"].map((i) => <IconBtn key={i} id={i} />)}
          </div>
          <div className="mt-[2px] flex justify-between pl-[49px] pr-[51px]">
            {["edit", "m16", "save", "insert"].map((i) => <IconBtn key={i} id={i} />)}
          </div>
          <div className="mx-[2px] mt-[1px] mb-[1px] flex-1 border border-[#828790] bg-white" />
        </aside>
      </main>

      <div className="flex h-[47px] shrink-0 border-t border-white pt-[2px] pb-[3px]">
        <Bar className="pl-px">
          <ToolBtn label="Exclusive snap" box="0 0 129 123"><Txt x={61} y={84} s={60}>Ex</Txt></ToolBtn>
          {["free", "grid", "end", "on", "center"].map((i) => snap(i))}
          <div className="relative">
            {snap("middle", true)}
            <span className="absolute -inset-x-1 -top-[7px] -bottom-[5px] rounded-md border-2 border-[#ed1c24]" />
            <Badge className="left-[52px] top-[2px]">2</Badge>
          </div>
          {snap("dist")}{snap("inter")}<Sep />
          {["horiz", "vert", "ortho"].map((i) => snap(i))}<Sep />
          {snap("relZero")}{snap("lockZero")}
        </Bar>
        <Bar>{snap("mLeft", true)}{snap("mRight", true)}{snap("mTop")}{snap("mBottom", true)}{snap("mFloat")}</Bar>
        <Bar>{snap("addList")}{snap("addTool")}</Bar>
        <Bar last>{snap("dimH")}{snap("dimV")}</Bar>
      </div>

      <footer className="flex h-[41px] shrink-0 overflow-hidden">
        <Stat className="w-[192px] border-r border-[#b0b0b0] pl-[6px] text-[17px]" a="37.6777 , 37.6777" b="53.2843 < 45.0000°" />
        <Stat className="w-[192px] border-r border-[#d0d0d0] pl-[6px] text-[17px]" a="17.6777 , 17.6777" b="25.0000 < 45.0000°" />
        <div className="flex w-[306px] items-center border-r border-[#d0d0d0] pl-[67px] pt-[5px]">
          指定位置
          <svg viewBox="0 0 20 20" className="ml-[7px] mr-[6px] h-5 w-5"><path d="M1 6 Q6 -1 9 5 Q10 8 12 7" fill="none" stroke="#444" strokeWidth="1.300" /><rect x="7.500" y="6" width="11" height="13" rx="3" fill="#fff" stroke="#555" /><path d="M11 5 H15 V11 H11Z" fill={G} stroke="#555" /><path d="M8 12 H18" stroke="#555" /></svg>
          返回
        </div>
        <Stat className="w-[46px] pl-[6px]" a="選取" b="0" />
        <Stat className="w-[81px] border-r border-[#d0d0d0] pl-[6px]" a="選取線長" b="0" />
        <Stat className="w-[121px] border-r border-[#d0d0d0] pl-1" a="Current Layer" b="0" />
        <Stat className="w-[108px] border-r border-[#d0d0d0] pl-2" a="Grid Status" b="10 / 100" />
      </footer>
      <div className="flex h-[11px] shrink-0 overflow-hidden bg-linear-to-r from-[#0e0f22] via-[#0b2328] to-[#1b2a2a] text-white">
        <span className="ml-[596px] h-full w-[73px] bg-[#243b42]" />
        <span className="ml-[2px] h-full w-[73px] bg-[#3f5357]" />
        <time className="ml-auto mr-[84px] mt-1 text-[17px] leading-6">下午 08:58</time>
        <span className="mr-[4px] w-[2px] bg-[#7c8585]" />
      </div>
    </div>
  );
}
